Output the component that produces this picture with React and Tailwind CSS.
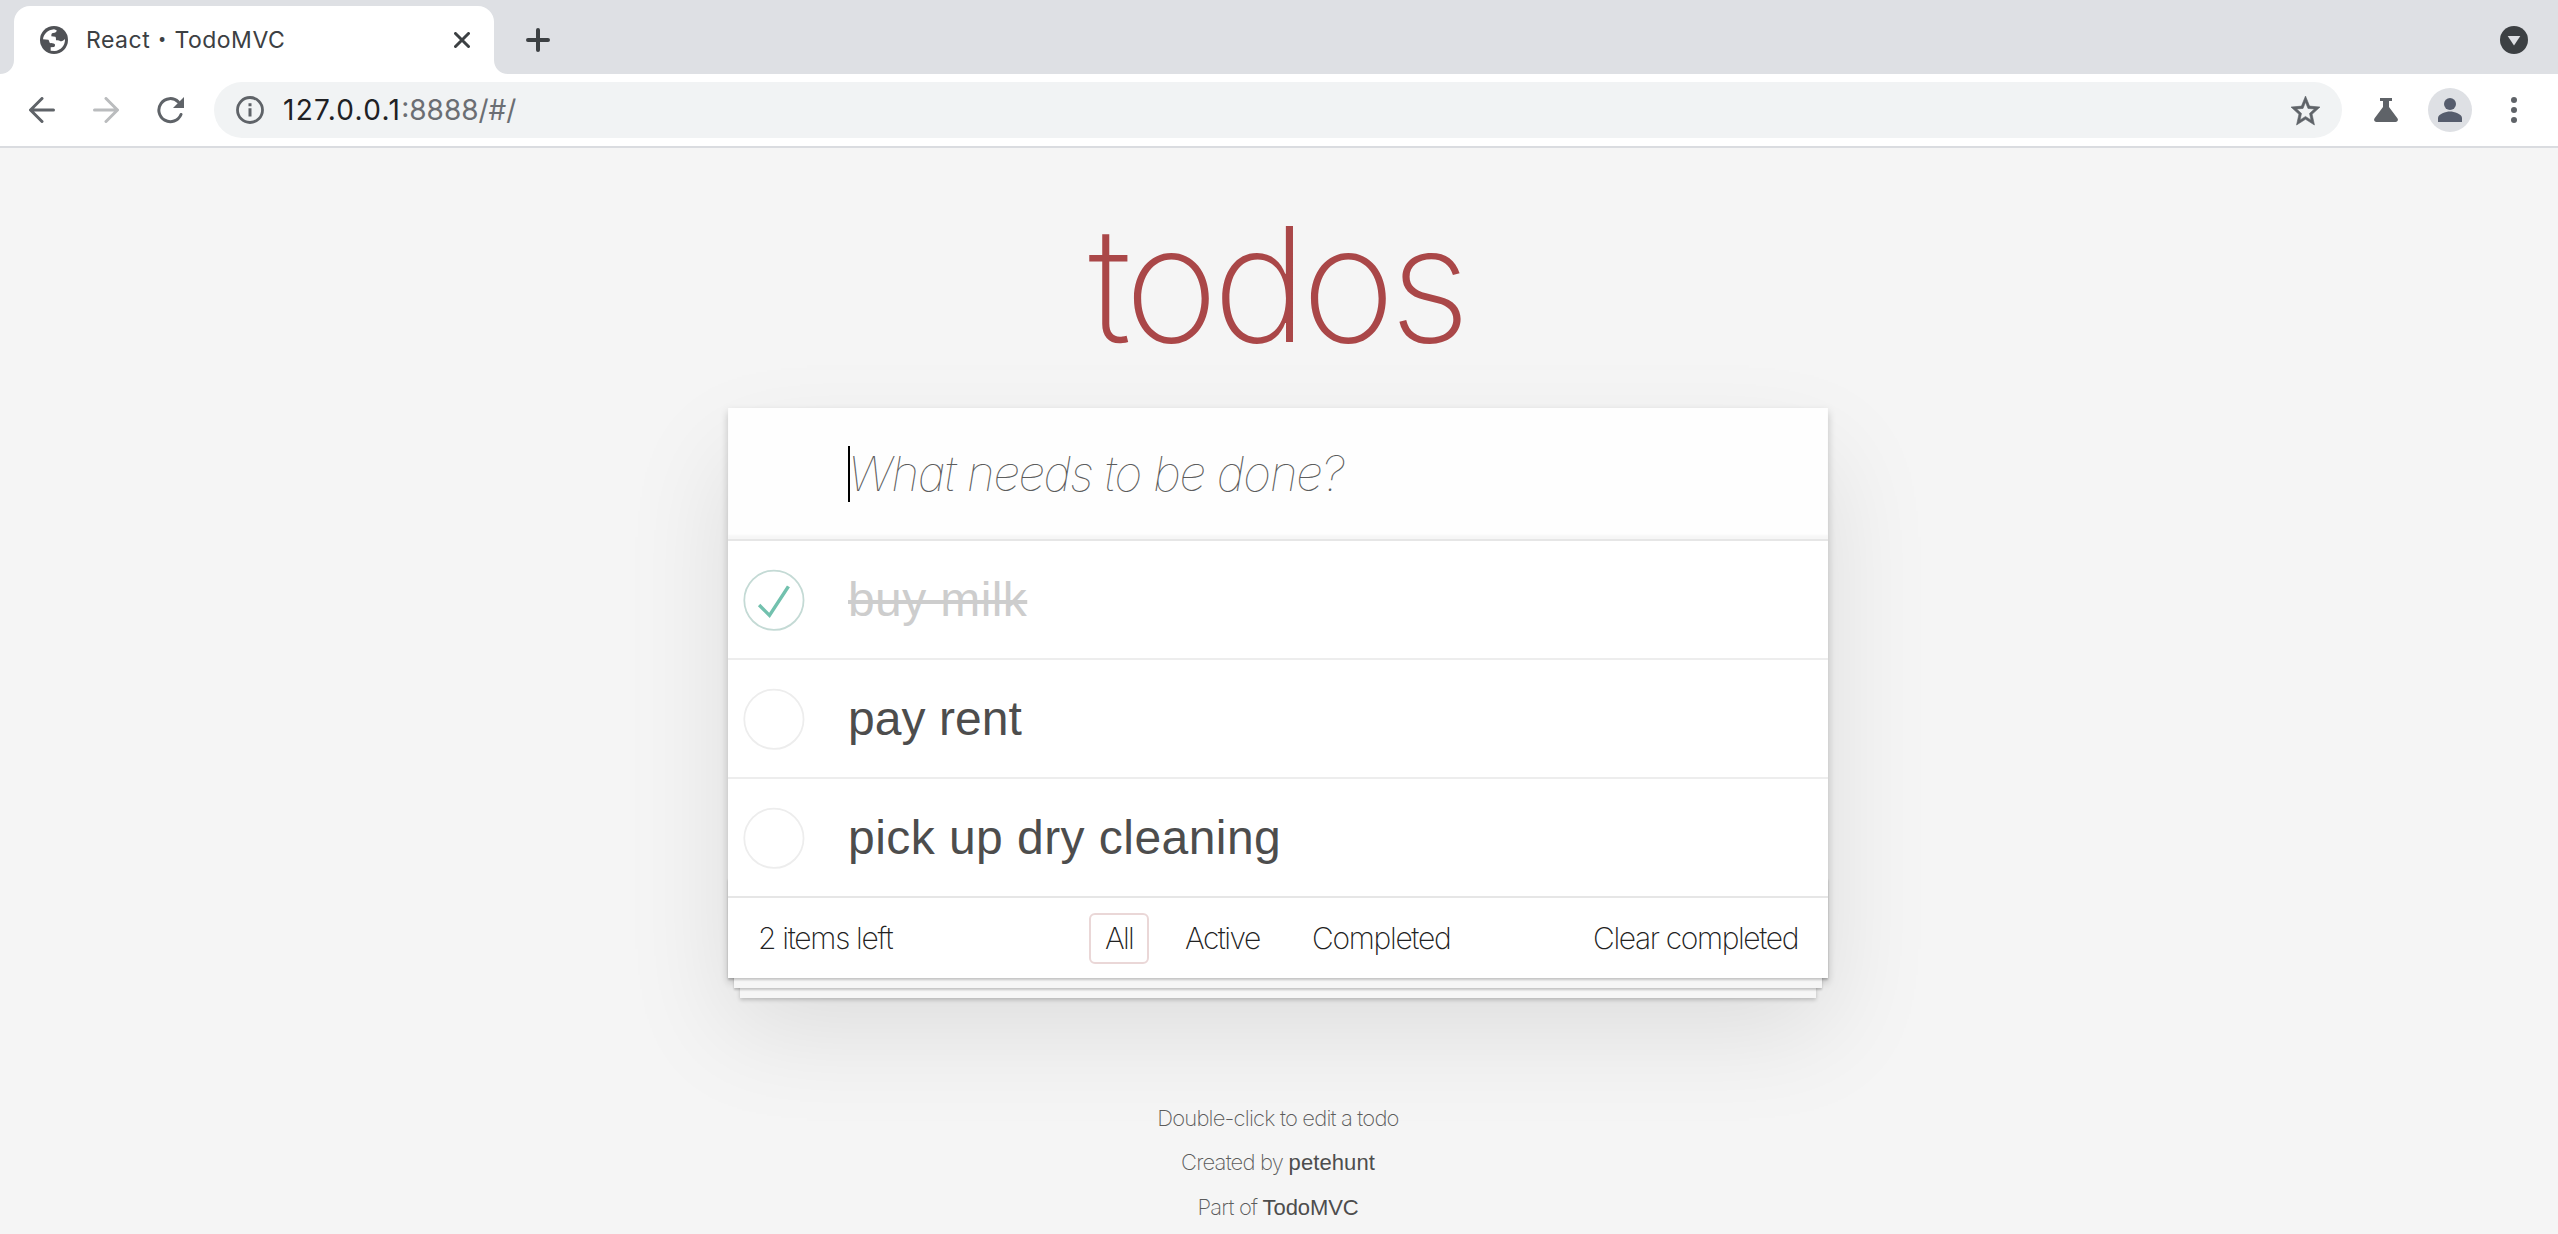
import React from "react";

const GlobeIcon = () => (
  <svg viewBox="0 0 84 84" className="h-7 w-7 shrink-0">
    <circle cx="42" cy="42" r="42" fill="#505256" />
    <path
      fill="#fff"
      d="M9 40C11 24 23 12 42 10L50 13C50 19 46 21 39 21C35 21 34 24 34 31L46 32C48 33 48 37 48 43C54 42 58 43 61 46C66 46 71 44 75 39C76 58 62 74 44 75L32 74L32 64L42 63C45 62 46 57 44 54C40 51 34 53 30 51C27 48 28 43 25 41Z"
    />
  </svg>
);

const CloseIcon = () => (
  <svg viewBox="0 0 16 16" className="h-4 w-4" fill="none" stroke="#3c4043" strokeWidth="3" strokeLinecap="round">
    <path d="M1.5 1.5l13 13M14.5 1.5l-13 13" />
  </svg>
);

const PlusIcon = () => (
  <svg viewBox="0 0 24 24" className="h-6 w-6" fill="none" stroke="#3c4043" strokeWidth="4" strokeLinecap="round">
    <path d="M12 2v20M2 12h20" />
  </svg>
);

const ArrowIcon = ({ className }) => (
  <svg viewBox="0 0 26 26" className={className} fill="none" stroke="currentColor" strokeWidth="3" strokeLinecap="round" strokeLinejoin="round">
    <path d="M13 1.5L1.5 13L13 24.5M2 13h22.5" />
  </svg>
);

const ReloadIcon = () => (
  <svg viewBox="0 0 28 28" className="h-7 w-7">
    <path d="M25 18.500A11.500 11.500 0 1 1 22.300 5.800" fill="none" stroke="#5f6368" strokeWidth="3" strokeLinecap="round" />
    <path d="M28 1v11H17z" fill="#5f6368" />
  </svg>
);

const InfoIcon = () => (
  <svg viewBox="0 0 28 28" className="h-7 w-7">
    <circle cx="14" cy="14" r="12.5" fill="none" stroke="#5f6368" strokeWidth="2.8" />
    <path d="M12.5 7.2h3v3h-3zM12.5 12.2h3v8.4h-3z" fill="#5f6368" />
  </svg>
);

const StarIcon = () => (
  <svg viewBox="2 2 20 19" className="h-[29px] w-[29px] overflow-visible" preserveAspectRatio="none">
    <path
      fill="#5f6368"
      stroke="#5f6368"
      strokeWidth="0.4"
      d="M22 9.24l-7.19-.62L12 2 9.19 8.63 2 9.24l5.46 4.73L5.82 21 12 17.27 18.18 21l-1.63-7.03L22 9.24zM12 15.4l-3.76 2.27 1-4.28-3.32-2.88 4.38-.38L12 6.1l1.71 4.04 4.38.38-3.32 2.88 1 4.28L12 15.4z"
    />
  </svg>
);

const FlaskIcon = () => (
  <svg viewBox="0 0 24 24" className="h-6 w-6">
    <path fill="#5f6368" d="M6 0h12v3h-3v6l8.4 11.2c1.2 1.8.2 3.8-1.9 3.8h-19C.4 24-.6 22 .6 20.2L9 9V3H6z" />
  </svg>
);

const Avatar = () => (
  <svg viewBox="0 0 44 44" className="h-11 w-11">
    <circle cx="22" cy="22" r="22" fill="#dee0e4" />
    <circle cx="22" cy="16" r="6" fill="#565d6d" />
    <path d="M10 34v-4c0-4 8-6.500 12-6.500s12 2.500 12 6.500v4z" fill="#565d6d" />
  </svg>
);

const MenuDots = () => (
  <svg viewBox="0 0 6 26" className="h-[26px] w-1.5" fill="#5f6368">
    <circle cx="3" cy="3" r="3" />
    <circle cx="3" cy="13" r="3" />
    <circle cx="3" cy="23" r="3" />
  </svg>
);

const TabSearch = () => (
  <svg viewBox="0 0 28 28" className="h-7 w-7">
    <circle cx="14" cy="14" r="14" fill="#3c4043" />
    <path d="M7.700 10h12.600L14 19.500z" fill="#dee0e4" />
  </svg>
);

const Curve = ({ d }) => (
  <svg viewBox="0 0 14 14" className="h-3.5 w-3.5 shrink-0 self-end">
    <path d={d} fill="#fff" />
  </svg>
);

function Browser() {
  return (
    <header className="font-[Inter,sans-serif]">
      <div className="flex h-[74px] items-center justify-between bg-[#dee0e4] pr-[30px]">
        <div className="flex h-full items-center">
          <Curve d="M14 0v14H0C8 14 14 8 14 0z" />
          <div className="flex h-[68px] w-[480px] items-center self-end rounded-t-2xl bg-white pr-6 pl-[26px]">
            <GlobeIcon />
            <div className="ml-[18px] flex-1 text-[23px] leading-7 tracking-[0.5px] whitespace-nowrap text-[#3c4043]">
              React <span className="mx-px font-[Roboto]">•</span> TodoMVC
            </div>
            <CloseIcon />
          </div>
          <Curve d="M0 0v14h14C6 14 0 8 0 0z" />
          <div className="ml-[18px] pt-1.5">
            <PlusIcon />
          </div>
        </div>
        <div className="pt-1.5">
          <TabSearch />
        </div>
      </div>
      <div className="flex h-[74px] items-center border-b-2 border-[#dadce0] bg-white pr-[41px] pl-[29px]">
        <ArrowIcon className="h-[26px] w-[26px] text-[#5f6368]" />
        <ArrowIcon className="ml-[38px] h-[26px] w-[26px] rotate-180 text-[#babcbe]" />
        <div className="ml-[37px]">
          <ReloadIcon />
        </div>
        <div className="ml-[30px] flex h-14 flex-1 items-center rounded-full bg-[#f1f3f4] pr-[22px] pl-[22px]">
          <InfoIcon />
          <div className="ml-[19px] flex-1 text-[28px] leading-8 whitespace-nowrap">
            <span className="tracking-[1.3px] text-[#202124]">127.0.0.1</span>
            <span className="text-[#6b6e73]">:8888/#/</span>
          </div>
          <StarIcon />
        </div>
        <div className="ml-8 flex items-center">
          <FlaskIcon />
          <div className="ml-[30px]">
            <Avatar />
          </div>
          <div className="ml-[39px]">
            <MenuDots />
          </div>
        </div>
      </div>
    </header>
  );
}

const Toggle = ({ done }) => (
  <svg viewBox="-10 -18 100 135" className="h-20 w-20 shrink-0 overflow-visible">
    <circle cx="50" cy="50" r="50" fill="none" stroke={done ? "#c4dad5" : "#ededed"} strokeWidth="3" />
    {done && <path fill="#72c1ae" d="M72 25L42 71 27 56l-4 4 20 20 34-52z" />}
  </svg>
);

const todos = [
  { text: "buy milk", done: true, spacing: "tracking-[0.4px]" },
  { text: "pay rent", done: false, spacing: "tracking-[0.05px]" },
  { text: "pick up dry cleaning", done: false, spacing: "tracking-[0.45px]" },
];

function TodoApp() {
  return (
    <section className="relative mx-auto w-[1100px] bg-white shadow-[0_4px_8px_0_rgba(0,0,0,0.2),0_50px_100px_0_rgba(0,0,0,0.1)]">
      <div className="flex h-[131px] items-center bg-[#fefefe] pl-[120px] shadow-[inset_0_-4px_2px_rgba(0,0,0,0.03)]">
        <span className="-mr-0.5 h-14 w-0.5 bg-black" />
        <span className="font-[Inter,sans-serif] text-[48px] leading-[56px] font-thin tracking-[-1.38px] text-[#5c5c5c] italic">
          What needs to be done?
        </span>
      </div>
      <ul className="border-t-2 border-[#e6e6e6]">
        {todos.map((t, i) => (
          <li
            key={t.text}
            className={`flex items-center border-[#ededed] ${i < 2 ? "h-[119px] border-b-2" : "h-[117px]"}`}
          >
            <Toggle done={t.done} />
            <div
              className={`ml-10 font-['Liberation_Sans',sans-serif] text-[48px] leading-[58px] ${t.spacing} ${
                t.done ? "text-[#cdcdcd] line-through decoration-4" : "text-[#4d4d4d]"
              }`}
            >
              {t.text}
            </div>
          </li>
        ))}
      </ul>
      <footer className="flex h-[82px] items-center border-t-2 border-[#e6e6e6] font-[Inter,sans-serif] text-[30px] leading-[38px] font-extralight text-[#222]">
        <span className="w-[361px] pl-[30px] tracking-[-1.3px]">2 items left</span>
        <span className="flex h-[51px] w-[60px] items-center justify-center rounded-md border-2 border-[#ead7d7] tracking-[-1.8px]">
          All
        </span>
        <span className="ml-[36px] w-[127px] tracking-[-1.5px]">Active</span>
        <span className="flex-1 tracking-[-1.3px]">Completed</span>
        <span className="pr-[30px] tracking-[-1.38px]">Clear completed</span>
      </footer>
      <div className="pointer-events-none absolute inset-x-0 bottom-0 h-[100px] shadow-[0_2px_2px_rgba(0,0,0,0.2),0_16px_0_-6px_#f6f6f6,0_18px_2px_-6px_rgba(0,0,0,0.2),0_32px_0_-12px_#f6f6f6,0_34px_4px_-12px_rgba(0,0,0,0.2)]" />
    </section>
  );
}

export default function App() {
  return (
    <div className="h-[1234px] w-full overflow-hidden bg-[#f5f5f5]">
      <Browser />
      <main className="pr-0.5">
        <h1 className="flex h-[260px] items-center justify-center pt-[11px] pr-[3px] font-[Inter,sans-serif] text-[160px] leading-none font-extralight tracking-[-5.700px] text-[#aa4748]">
          todos
        </h1>
        <TodoApp />
        <div className="mt-[118px] text-center font-[Inter,sans-serif] text-[22px] leading-[44px] font-extralight text-[#5c5c5c]">
          <p className="tracking-[-0.82px]">Double-click to edit a todo</p>
          <p>
            <span className="tracking-[-0.8px]">Created by </span>
            <span className="font-['Liberation_Sans',sans-serif] font-normal tracking-[0.1px] text-[#4d4d4d]">petehunt</span>
          </p>
          <p>
            <span className="tracking-[-0.8px]">Part of </span>
            <span className="font-['Liberation_Sans',sans-serif] font-normal tracking-[-0.1px] text-[#4d4d4d]">TodoMVC</span>
          </p>
        </div>
      </main>
    </div>
  );
}
